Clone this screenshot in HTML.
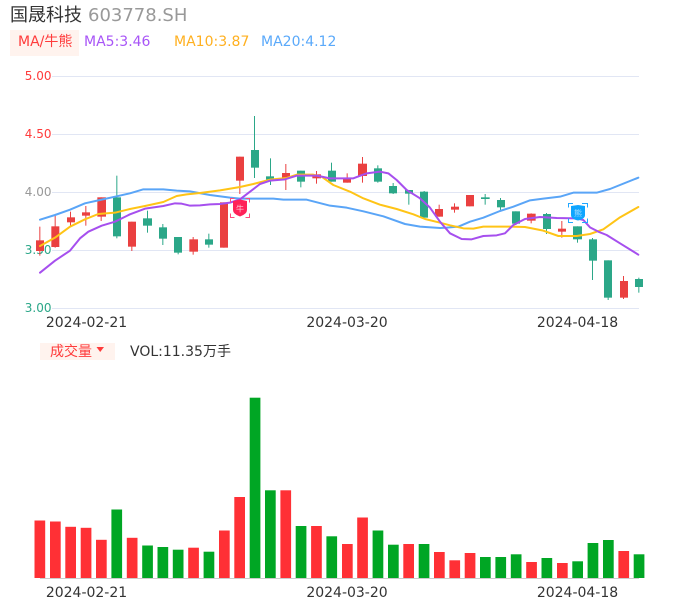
<!DOCTYPE html>
<html>
<head>
<meta charset="utf-8">
<style>
html,body{margin:0;padding:0;background:#fff;width:686px;height:606px;overflow:hidden}
svg{display:block}
text{font-family:"DejaVu Sans","Noto Sans CJK SC",sans-serif}
</style>
</head>
<body>
<svg width="686" height="606" viewBox="0 0 686 606" xmlns="http://www.w3.org/2000/svg">
<rect width="686" height="606" fill="#fff"/>
<!-- header -->
<text x="10" y="21" font-size="18" fill="#333">国晟科技</text>
<text x="88" y="21" font-size="18" fill="#999">603778.SH</text>
<rect x="10" y="30" width="69" height="26" fill="#fff3ee"/>
<text x="18" y="46" font-size="14" fill="#ff3b3b">MA/牛熊</text>
<text x="84" y="46" font-size="14" fill="#a855f7">MA5:3.46</text>
<text x="174" y="46" font-size="14" fill="#ffb020">MA10:3.87</text>
<text x="261" y="46" font-size="14" fill="#5aa9fa">MA20:4.12</text>
<!-- grid -->
<g stroke="#e1e6f4" stroke-width="1">
<line x1="52" x2="639" y1="76.5" y2="76.5"/>
<line x1="52" x2="639" y1="134.5" y2="134.5"/>
<line x1="52" x2="639" y1="192.5" y2="192.5"/>
<line x1="52" x2="639" y1="250.5" y2="250.5"/>
<line x1="52" x2="639" y1="308.5" y2="308.5"/>
</g>
<g font-size="12" text-anchor="end">
<text x="51.500" y="80" fill="#ff3b3b">5.00</text>
<text x="51.500" y="138" fill="#ff3b3b">4.50</text>
<text x="51.500" y="196" fill="#999">4.00</text>
<text x="51.500" y="254" fill="#2ba788">3.50</text>
<text x="51.500" y="312" fill="#2ba788">3.00</text>
</g>
<!-- chart in zoom coordinates -->
<g transform="translate(20,110) scale(0.33333)">
<g id="candles">
<g fill="#ea4040">
<rect x="58" y="350" width="3" height="87"/><rect x="48" y="391" width="24" height="32"/>
<rect x="104" y="315" width="3" height="98"/><rect x="94" y="349" width="24" height="62"/>
<rect x="150" y="305" width="3" height="45"/><rect x="141" y="322" width="24" height="15"/>
<rect x="196" y="288" width="3" height="59"/><rect x="186" y="307" width="24" height="10"/>
<rect x="242" y="262" width="3" height="71"/><rect x="232" y="262" width="26" height="58"/>
<rect x="334" y="335" width="3" height="88"/><rect x="324" y="335" width="24" height="75"/>
<rect x="518" y="381" width="3" height="53"/><rect x="508" y="388" width="26" height="37"/>
<rect x="610" y="277" width="3" height="136"/><rect x="600" y="277" width="24" height="136"/>
<rect x="658" y="140" width="3" height="112"/><rect x="648" y="140" width="24" height="72"/>
<rect x="796" y="162" width="3" height="78"/><rect x="786" y="189" width="24" height="16"/>
<rect x="888" y="183" width="3" height="38"/><rect x="877" y="193" width="26" height="12"/>
<rect x="980" y="190" width="3" height="28"/><rect x="969" y="205" width="24" height="13"/>
<rect x="1026" y="141" width="3" height="77"/><rect x="1014" y="161" width="27" height="37"/>
<rect x="1256" y="284" width="3" height="36"/><rect x="1245" y="297" width="24" height="23"/>
<rect x="1302" y="280" width="3" height="28"/><rect x="1293" y="290" width="24" height="9"/>
<rect x="1348" y="255" width="3" height="34"/><rect x="1338" y="255" width="24" height="34"/>
<rect x="1532" y="310" width="3" height="30"/><rect x="1521" y="311" width="26" height="21"/>
<rect x="1624" y="333" width="3" height="50"/><rect x="1614" y="356" width="24" height="9"/>
<rect x="1809" y="498" width="3" height="69"/><rect x="1800" y="513" width="24" height="50"/>
</g>
<g fill="#2ba788">
<rect x="289" y="197" width="3" height="188"/><rect x="279" y="262" width="24" height="117"/>
<rect x="381" y="302" width="3" height="66"/><rect x="369" y="325" width="27" height="22"/>
<rect x="427" y="342" width="3" height="63"/><rect x="417" y="352" width="24" height="34"/>
<rect x="473" y="381" width="3" height="52"/><rect x="462" y="381" width="24" height="47"/>
<rect x="565" y="371" width="3" height="42"/><rect x="555" y="388" width="24" height="16"/>
<rect x="702" y="18" width="3" height="186"/><rect x="693" y="120" width="24" height="53"/>
<rect x="750" y="145" width="3" height="80"/><rect x="738" y="199" width="24" height="10"/>
<rect x="841" y="182" width="3" height="50"/><rect x="831" y="182" width="24" height="33"/>
<rect x="933" y="158" width="3" height="57"/><rect x="924" y="182" width="24" height="33"/>
<rect x="1072" y="166" width="3" height="52"/><rect x="1062" y="175" width="24" height="40"/>
<rect x="1118" y="219" width="3" height="33"/><rect x="1107" y="228" width="24" height="22"/>
<rect x="1165" y="240" width="3" height="44"/><rect x="1155" y="240" width="24" height="11"/>
<rect x="1211" y="243" width="3" height="80"/><rect x="1200" y="245" width="24" height="78"/>
<rect x="1394" y="252" width="3" height="32"/><rect x="1383" y="262" width="26" height="5"/>
<rect x="1440" y="264" width="3" height="39"/><rect x="1431" y="270" width="24" height="22"/>
<rect x="1486" y="304" width="3" height="41"/><rect x="1476" y="304" width="24" height="37"/>
<rect x="1578" y="309" width="3" height="63"/><rect x="1569" y="312" width="24" height="45"/>
<rect x="1671" y="349" width="3" height="49"/><rect x="1659" y="349" width="27" height="39"/>
<rect x="1716" y="384" width="3" height="126"/><rect x="1707" y="388" width="24" height="64"/>
<rect x="1763" y="451" width="3" height="119"/><rect x="1752" y="451" width="24" height="112"/>
<rect x="1855" y="503" width="3" height="45"/><rect x="1845" y="507" width="24" height="24"/>
</g>
</g>
<g fill="none" stroke-width="6" stroke-linejoin="round" stroke-linecap="round">
<polyline stroke="#5aa5f7" points="60,329 105,315 150,299 195,280 240,270 285,260 330,250 370,238 430,238 470,242 510,244 570,255 630,263 660,266 760,266 790,269 860,269 930,287 980,293 1030,304 1090,319 1155,342 1200,350 1260,354 1280,353 1315,350 1350,335 1390,323 1440,303 1480,290 1530,271 1570,266 1620,260 1660,248 1730,248 1770,237 1855,203"/>
<polyline stroke="#ffc416" points="60,408 105,383 150,350 195,328 235,312 285,308 330,297 375,288 430,276 470,258 500,253 540,249 600,241 660,231 700,222 750,209 800,204 830,194 880,194 905,200 940,225 990,245 1030,265 1080,284 1130,297 1180,313 1215,327 1260,338 1290,346 1330,355 1360,356 1390,350 1470,350 1515,351 1570,362 1615,378 1670,378 1710,372 1750,358 1800,322 1855,291"/>
<polyline stroke="#a64fee" points="60,488 105,452 150,422 180,385 205,365 245,347 285,335 330,313 375,296 430,288 465,280 485,281 510,287 540,286 570,283 600,282 630,278 660,268 690,245 720,222 750,212 795,208 830,197 890,197 930,205 1000,205 1040,190 1080,185 1105,190 1130,210 1160,240 1200,265 1230,293 1260,335 1290,370 1325,387 1355,388 1390,378 1430,376 1455,370 1480,345 1515,327 1560,321 1610,324 1670,325 1690,330 1710,352 1735,365 1760,375 1800,400 1855,434"/>
</g>
</g>
<!-- pink badge -->
<g>
<path d="M230.500 202.500V198.500H234.500M245.500 198.500H249.500V202.500M249.500 213.500V217.500H245.500M234.500 217.500H230.500V213.500" fill="none" stroke="#ff4d7d" stroke-width="1"/>
<path d="M233 201L240 199.500L247 201V210Q247 214 240 216.500Q233 214 233 210Z" fill="#ff2158"/>
<text x="240" y="211.500" font-size="8" text-anchor="middle" fill="#ffc6d6">牛</text>
</g>
<!-- blue badge -->
<g>
<path d="M568.500 207.500V203.500H573M582 203.500H587.500V207.500M587.500 218.500V222.500H582M573 222.500H568.500V218.500" fill="none" stroke="#22a7ff" stroke-width="1"/>
<path d="M571 206L578 205L585 206V215Q585 219 578 220.500Q571 219 571 215Z" fill="#0ea5ff"/>
<text x="578" y="216" font-size="8" text-anchor="middle" fill="#a8defF">熊</text>
</g>
<!-- top dates -->
<g font-size="14" fill="#333" text-anchor="middle">
<text x="86.500" y="327">2024-02-21</text>
<text x="347" y="327">2024-03-20</text>
<text x="577.500" y="327">2024-04-18</text>
</g>
<!-- volume header -->
<rect x="40" y="343" width="75" height="17" fill="#fff3ee"/>
<text x="50" y="356" font-size="14" fill="#ff3b3b">成交量</text>
<path d="M96.500 347H104L100.200 352Z" fill="#ff3b3b"/>
<text x="130" y="356" font-size="14" fill="#333">VOL:11.35万手</text>
<!-- volume -->
<line x1="40" x2="639" y1="578.500" y2="578.500" stroke="#ccc" stroke-width="1"/>
<g fill="#ff3035">
<rect x="34.500" y="520.500" width="10.700" height="57.500"/>
<rect x="50" y="521.500" width="10.700" height="56.500"/>
<rect x="65.300" y="526.800" width="10.700" height="51.200"/>
<rect x="80.700" y="527.800" width="10.700" height="50.200"/>
<rect x="96" y="539.800" width="10.700" height="38.200"/>
<rect x="126.800" y="537.800" width="10.700" height="40.200"/>
<rect x="188.200" y="547.700" width="10.700" height="30.300"/>
<rect x="219" y="530.500" width="10.700" height="47.500"/>
<rect x="234.300" y="497" width="10.700" height="81"/>
<rect x="280.400" y="490.300" width="10.700" height="87.700"/>
<rect x="311.100" y="526" width="10.700" height="52"/>
<rect x="342" y="544" width="10.700" height="34"/>
<rect x="357.200" y="517.500" width="10.700" height="60.500"/>
<rect x="403.300" y="544" width="10.700" height="34"/>
<rect x="434" y="552" width="10.700" height="26"/>
<rect x="449.400" y="560.300" width="10.700" height="17.700"/>
<rect x="464.700" y="553" width="10.700" height="25"/>
<rect x="526.200" y="562" width="10.700" height="16"/>
<rect x="557" y="563" width="10.700" height="15"/>
<rect x="618.400" y="551" width="10.700" height="27"/>
</g>
<g fill="#00a624">
<rect x="111.400" y="509.500" width="10.700" height="68.500"/>
<rect x="142.200" y="545.500" width="10.700" height="32.500"/>
<rect x="157.500" y="547" width="10.700" height="31"/>
<rect x="172.800" y="549.700" width="10.700" height="28.300"/>
<rect x="203.600" y="551.700" width="10.700" height="26.300"/>
<rect x="249.700" y="397.700" width="10.700" height="180.300"/>
<rect x="265" y="490.300" width="10.700" height="87.700"/>
<rect x="295.700" y="526" width="10.700" height="52"/>
<rect x="326.400" y="536.300" width="10.700" height="41.700"/>
<rect x="372.600" y="530.500" width="10.700" height="47.500"/>
<rect x="388" y="544.700" width="10.700" height="33.300"/>
<rect x="418.700" y="544" width="10.700" height="34"/>
<rect x="480" y="557" width="10.700" height="21"/>
<rect x="495.400" y="557" width="10.700" height="21"/>
<rect x="510.800" y="554.300" width="10.700" height="23.700"/>
<rect x="541.500" y="558" width="10.700" height="20"/>
<rect x="572.300" y="561.300" width="10.700" height="16.700"/>
<rect x="587.600" y="543" width="10.700" height="35"/>
<rect x="603" y="540" width="10.700" height="38"/>
<rect x="633.700" y="554.300" width="10.700" height="23.700"/>
</g>
<!-- bottom dates -->
<g font-size="14" fill="#333" text-anchor="middle">
<text x="86.500" y="597">2024-02-21</text>
<text x="347" y="597">2024-03-20</text>
<text x="577.500" y="597">2024-04-18</text>
</g>
</svg>
</body>
</html>
